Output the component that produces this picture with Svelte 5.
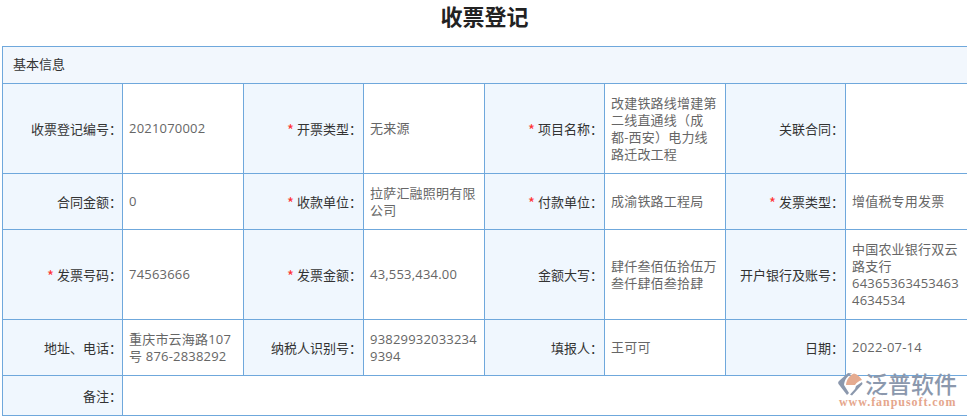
<script>
    // each row: [label, value, required] pairs, four to a row
    const rows = [
        [
            { label: "收票登记编号", value: ["2021070002"] },
            { label: "开票类型", value: ["无来源"], required: true },
            { label: "项目名称", value: ["改建铁路线增建第", "二线直通线（成", "都-西安）电力线", "路迁改工程"], required: true },
            { label: "关联合同", value: [] }
        ],
        [
            { label: "合同金额", value: ["0"] },
            { label: "收款单位", value: ["拉萨汇融照明有限", "公司"], required: true },
            { label: "付款单位", value: ["成渝铁路工程局"], required: true },
            { label: "发票类型", value: ["增值税专用发票"], required: true }
        ],
        [
            { label: "发票号码", value: ["74563666"], required: true },
            { label: "发票金额", value: ["43,553,434.00"], required: true },
            { label: "金额大写", value: ["肆仟叁佰伍拾伍万", "叁仟肆佰叁拾肆"] },
            { label: "开户银行及账号", value: ["中国农业银行双云", "路支行", "64365363453463", "4634534"] }
        ],
        [
            { label: "地址、电话", value: ["重庆市云海路107", "号 876-2838292"] },
            { label: "纳税人识别号", value: ["93829932033234", "9394"] },
            { label: "填报人", value: ["王可可"] },
            { label: "日期", value: ["2022-07-14"] }
        ]
    ];
    const heights = [90, 56, 90, 56];
    const widths = [120, 121, 120, 121, 120, 121, 120, 122];
</script>

<div class="page">
    <h1>收票登记</h1>
    <div class="sheet">
        <table>
            <colgroup>
                {#each widths as w}
                    <col style="width: {w}px" />
                {/each}
            </colgroup>
            <tbody>
                <tr class="head"><td colspan="8">基本信息</td></tr>
                {#each rows as row, i}
                    <tr style="height: {heights[i]}px">
                        {#each row as cell}
                            <td class="label">
                                {#if cell.required}<span class="star">*</span>{/if}{cell.label}：
                            </td>
                            <td class="value">
                                {#each cell.value as line}
                                    <div>{line}</div>
                                {/each}
                            </td>
                        {/each}
                    </tr>
                {/each}
                <tr class="last">
                    <td class="label">备注：</td>
                    <td colspan="7"></td>
                </tr>
            </tbody>
        </table>
        <div class="logo">
            <div class="top">
                <svg width="26" height="25" viewBox="0 0 26 25">
                    <path d="M11 2 L15 2.5 C10 5 7.5 9 7 14 L12 22 L10 24 L1.5 13 C1 12 1 11 2 10 Z" fill="#8b98ad" />
                    <path d="M17 2.5 C20 3 23 6 25 9 C22 10 19.5 11.5 18 14 L9 14 C9.5 8.5 12.5 4.5 17 2.5Z" fill="#e5ab90" />
                    <path d="M19 15 L25 11 L25.5 13 L15 24.5 L13 23.5 L18 18Z" fill="#8b98ad" />
                </svg>
                <div class="cn">泛普软件</div>
            </div>
            <div class="url">www.fanpusoft.com</div>
        </div>
    </div>
</div>

<style>
    :global(body) {
        margin: 0;
        background: #fff;
    }
    .page {
        width: 967px;
        height: 418px;
        overflow: hidden;
        font-family: "Noto Sans CJK SC", "Open Sans", sans-serif;
        font-size: 13px;
        color: #333;
    }
    h1 {
        margin: 0;
        height: 46px;
        padding-left: 2px;
        box-sizing: border-box;
        line-height: 30px;
        font-size: 22px;
        font-weight: 700;
        text-align: center;
        color: #222;
    }
    .sheet {
        position: relative;
        margin-left: 2px;
        width: 965px;
    }
    table {
        width: 965px;
        table-layout: fixed;
        border-collapse: collapse;
    }
    td {
        border: 1px solid #6fa8dc;
        padding: 0 6px;
        line-height: 17px;
        box-sizing: border-box;
    }
    .head {
        height: 37px;
    }
    .head td {
        background: #f2f7fd;
        padding: 0 10px 4px;
    }
    .last {
        height: 40px;
    }
    .label {
        background: #f0f7fe;
        text-align: right;
        padding-right: 1px;
        color: #333;
    }
    .label:first-child {
        padding-right: 0;
    }
    .value {
        color: #666;
        font-family: "Open Sans", "Noto Sans CJK SC", sans-serif;
        letter-spacing: 0.2px;
    }
    .star {
        margin-right: 3px;
        color: #f33;
        font-size: 15px;
        line-height: 13px;
        vertical-align: -2px;
    }
    .logo {
        position: absolute;
        left: 835px;
        top: 325px;
        width: 122px;
    }
    .top {
        display: flex;
        gap: 2px;
        align-items: center;
    }
    .cn {
        font-size: 23px;
        line-height: 25px;
        font-weight: 500;
        color: #8b98ad;
    }
    .url {
        padding-left: 2px;
        font-family: "Liberation Serif", serif;
        font-size: 12px;
        line-height: 12px;
        font-weight: 700;
        letter-spacing: 0.95px;
        white-space: nowrap;
        color: #e5a68c;
    }
</style>
